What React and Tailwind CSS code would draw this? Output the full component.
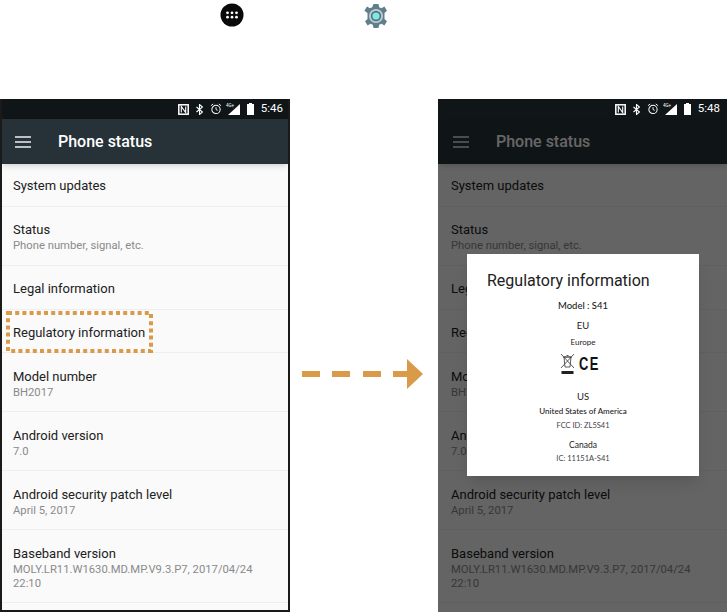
import React from 'react';

const rows = [
  { title: 'System updates', h: 'h-[43px]', pad: 'pt-[1px]' },
  { title: 'Status', sub: 'Phone number, signal, etc.', h: 'h-[59px]', pad: 'pt-[1px]' },
  { title: 'Legal information', h: 'h-[44px]', pad: 'pt-[3px]' },
  { title: 'Regulatory information', h: 'h-[43px]', pad: 'pt-[3px]' },
  { title: 'Model number', sub: 'BH2017', h: 'h-[59px]', pad: 'pt-[3px]' },
  { title: 'Android version', sub: '7.0', h: 'h-[59px]', pad: 'pt-[3px]' },
  { title: 'Android security patch level', sub: 'April 5, 2017', h: 'h-[59px]', pad: 'pt-[3px]' },
  { title: 'Baseband version', sub: 'MOLY.LR11.W1630.MD.MP.V9.3.P7, 2017/04/24 22:10', h: 'h-[73px]', pad: 'pt-[3px]' },
];

function AppsIcon() {
  return (
    <svg width="24" height="24" viewBox="0 0 24 24">
      <circle cx="12" cy="12" r="11.5" fill="#0a0a0a" />
      {[7.500, 12, 16.500].map((x) =>
        [9.800, 14.200].map((y) => <circle key={`${x}-${y}`} cx={x} cy={y} r="1.400" fill="#fff" />)
      )}
    </svg>
  );
}

function GearIcon() {
  return (
    <svg width="26" height="26" viewBox="0 0 26 26">
      <path
        fill="#5f7f8f"
        d="M10.500 1h5l.7 3.300 2.300 1 2.900-1.800 2.600 4.200-2.500 2.300v6l2.500 2.300-2.600 4.200-2.900-1.800-2.300 1-.7 3.300h-5l-.7-3.300-2.300-1-2.900 1.800-2.600-4.200 2.500-2.300v-6L1.400 7.700 4 3.500l2.900 1.800 2.300-1z"
      />
      <circle cx="13" cy="13" r="7" fill="#c2ced3" />
      <circle cx="13" cy="13" r="5.200" fill="#4f6f7d" />
      <circle cx="13" cy="13" r="3.600" fill="#7fe8e0" />
    </svg>
  );
}

function StatusBar({ time, framed }) {
  return (
    <div className={`flex h-[20px] items-center justify-end bg-[#101518] text-white ${framed ? 'pr-[5px]' : 'pr-[7px]'}`}>
      <svg width="11" height="11" viewBox="0 0 11 11" className="mr-[7px]">
        <rect x="0.800" y="0.800" width="9.400" height="9.400" fill="none" stroke="#fff" strokeWidth="1.500" />
        <path d="M3.300 8.500V2.500l4.400 6V2.500" fill="none" stroke="#fff" strokeWidth="1.100" />
      </svg>
      <svg width="7" height="11" viewBox="0 0 7 11" className="mr-[7px]">
        <path d="M.5 3l6 5-3 2.500v-10l3 2.500-6 5" fill="none" stroke="#fff" strokeWidth="1.100" />
      </svg>
      <svg width="12" height="12" viewBox="0 0 13 13" className="mr-[4px]">
        <circle cx="6.500" cy="7" r="4.500" fill="none" stroke="#fff" strokeWidth="1.100" />
        <path d="M6.500 4.500V7l1.800 1M1 3l2.500-2M12 3L9.500 1" fill="none" stroke="#fff" strokeWidth="1" />
      </svg>
      <svg width="15" height="12" viewBox="0 0 15 12" className="mr-[6px]">
        <path d="M14 1v11H2z" fill="#fff" />
        <text x="0" y="4" fontSize="4.500" fill="#fff" fontFamily="Roboto, sans-serif">4G+</text>
      </svg>
      <svg width="7" height="12" viewBox="0 0 7 12" className="mr-[7px]">
        <path d="M2 0h3v1h2v11H0V1h2z" fill="#fff" />
      </svg>
      <span className="text-[11.500px] leading-none">{time}</span>
    </div>
  );
}

function Phone({ time, dim, framed, highlight, children }) {
  return (
    <div className={`relative h-full overflow-hidden bg-[#fafafa] font-['Roboto',sans-serif] ${framed ? 'w-[290px] border-x-2 border-b-2 border-[#1a1a1a]' : 'w-[289px]'}`}>
      <StatusBar time={time} framed={framed} />
      <div className={`flex h-[45px] items-center bg-[#263238] shadow-md ${framed ? 'pl-[13px]' : 'pl-[15px]'}`}>
        <svg width="16" height="12" viewBox="0 0 16 12">
          <path d="M0 1h16M0 6h16M0 11h16" stroke="#eceff1" strokeWidth="1.700" />
        </svg>
        <span className="ml-[27px] text-[16px] font-medium text-white">Phone status</span>
      </div>
      <div>
        {rows.map((row) => (
          <div key={row.title} className={`flex flex-col justify-center border-b border-[#eeeeee] pr-[20px] ${framed ? 'pl-[11px]' : 'pl-[13px]'} ${row.h} ${row.pad}`}>
            <div className="text-[13px] leading-[18px] text-[#212121]">{row.title}</div>
            {row.sub && <div className="text-[11.250px] leading-[14px] text-[#8a8a8a]">{row.sub}</div>}
          </div>
        ))}
      </div>
      {dim && <div className="absolute inset-x-0 bottom-0 top-[20px] bg-black/60" />}
      {highlight && (
        <svg width="147" height="42" viewBox="0 0 147 42" className="absolute left-[4px] top-[212px]">
          <rect x="2" y="2" width="143" height="38" fill="none" stroke="#d99a4a" strokeWidth="4" strokeDasharray="4 3.200" />
        </svg>
      )}
      {children}
    </div>
  );
}

function RegulatoryDialog() {
  return (
    <div className="absolute left-[29px] top-[155px] h-[222px] w-[232px] bg-white text-center font-['Lato',sans-serif] text-[#222] shadow-lg">
      <div className="mt-[15px] pl-[20px] text-left font-['Roboto',sans-serif] text-[16px] leading-[24px] text-[#212121]">Regulatory information</div>
      <div className="mt-[6px] text-[9.500px] font-medium leading-[14px]">Model : S41</div>
      <div className="mt-[7px] text-[9.500px] leading-[12px]">EU</div>
      <div className="mt-[5px] text-[8px] leading-[11px]">Europe</div>
      <div className="mt-[5px] flex h-[21px] items-center justify-center gap-[4px] pr-[5px]">
        <svg width="15" height="21" viewBox="0 0 15 21">
          <path d="M4 4h7l-1 10H5zM3 4h9M6.500 2.500h2M1 1l13 14M14 1L1 15" fill="none" stroke="#333" strokeWidth="0.800" />
          <rect x="1.500" y="18" width="12" height="3" fill="#222" />
        </svg>
        <span className="block w-[22px]">
          <span className="block origin-left scale-x-[0.68] whitespace-nowrap text-left font-['Liberation_Sans',sans-serif] text-[19px] font-bold leading-none tracking-[2px] text-[#111]">CE</span>
        </span>
      </div>
      <div className="mt-[17px] text-[9.500px] leading-[12px]">US</div>
      <div className="mt-[3px] text-[8px] font-medium leading-[11px]">United States of America</div>
      <div className="mt-[3px] text-[7.500px] leading-[11px] text-[#444]">FCC ID: ZL5S41</div>
      <div className="mt-[8px] text-[8.500px] leading-[12px]">Canada</div>
      <div className="mt-[2px] text-[7.500px] leading-[11px] text-[#444]">IC: 11151A-S41</div>
    </div>
  );
}

function Arrow() {
  return (
    <div className="mt-[36px] flex items-center">
      <div className="h-[6px] w-[18px] bg-[#d99a4a]" />
      <div className="ml-[12px] h-[6px] w-[18px] bg-[#d99a4a]" />
      <div className="ml-[13px] h-[6px] w-[18px] bg-[#d99a4a]" />
      <div className="ml-[12px] h-[6px] w-[14px] bg-[#d99a4a]" />
      <svg width="16" height="30" viewBox="0 0 16 30">
        <path d="M0 0l16 15L0 30z" fill="#d99a4a" />
      </svg>
    </div>
  );
}

export default function App() {
  return (
    <div className="flex h-[612px] w-[727px] flex-col overflow-hidden bg-white">
      <div className="flex h-[99px] items-start pl-[220px] pt-[3px]">
        <AppsIcon />
        <div className="ml-[119px]">
          <GearIcon />
        </div>
      </div>
      <div className="flex min-h-0 flex-1">
        <Phone time="5:46" framed highlight />
        <div className="flex w-[148px] items-center pl-[12px]">
          <Arrow />
        </div>
        <Phone time="5:48" dim>
          <RegulatoryDialog />
        </Phone>
      </div>
    </div>
  );
}
